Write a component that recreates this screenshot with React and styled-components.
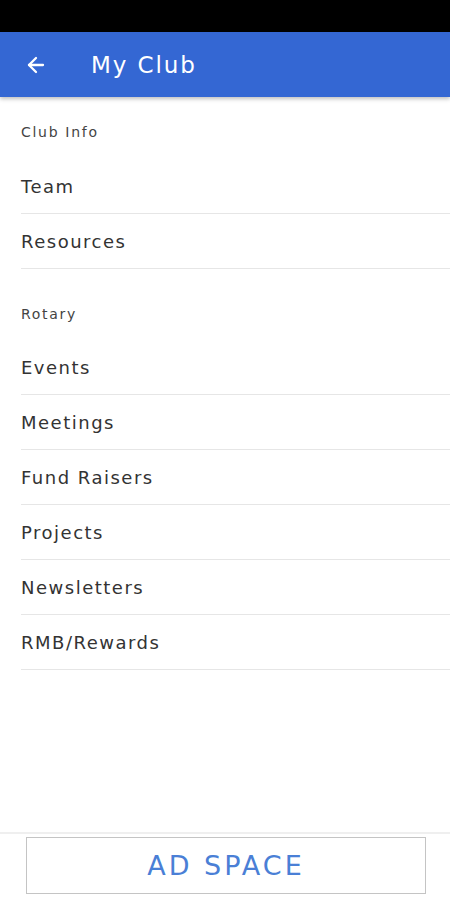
import React from 'react';
import styled, { createGlobalStyle } from 'styled-components';
import { ArrowLeft } from 'lucide-react';

const GlobalStyle = createGlobalStyle`
    html, body {
        margin: 0;
        padding: 0;
        background: #fff;
    }
    body {
        font-family: "DejaVu Sans", "Open Sans", sans-serif;
    }
`;

const Screen = styled.div`
    display: flex;
    flex-direction: column;
    width: 450px;
    height: 900px;
    background: #fff;
    overflow: hidden;
`;

const StatusBar = styled.div`
    height: 32px;
    background: #000;
    flex-shrink: 0;
`;

const Header = styled.header`
    display: flex;
    align-items: center;
    height: 65px;
    flex-shrink: 0;
    background: #3467d3;
    color: #fff;
    box-shadow: 0 2px 4px rgba(0,0,0,0.25);
    position: relative;
    z-index: 1;
`;

const BackButton = styled.button`
    display: flex;
    align-items: center;
    justify-content: center;
    width: 24px;
    height: 24px;
    margin-left: 24px;
    padding: 0;
    border: none;
    background: none;
    color: #fff;
    cursor: pointer;
`;

const Title = styled.h1`
    margin: 0 0 0 43px;
    font-size: 23px;
    font-weight: 500;
    letter-spacing: 1.9px;
`;

const Content = styled.div`
    flex: 1;
    padding-left: 21px;
`;

const SectionLabel = styled.div`
    padding-top: ${(props) => (props.first ? '26px' : '36px')};
    padding-bottom: ${(props) => (props.first ? '18px' : '17px')};
    line-height: 18px;
    font-size: 14px;
    color: #444;
    letter-spacing: 1.7px;
`;

const Row = styled.div`
    display: flex;
    align-items: center;
    height: 55px;
    box-sizing: border-box;
    padding-top: 1px;
    border-bottom: 1.5px solid #e6e6e6;
    font-size: 18px;
    color: #333;
    letter-spacing: 1.5px;
    cursor: pointer;
`;

const Footer = styled.div`
    flex-shrink: 0;
    border-top: 2px solid #efefef;
    padding: 3px 24px 6px 26px;
`;

const AdBox = styled.div`
    display: flex;
    align-items: center;
    justify-content: center;
    height: 55px;
    border: 1.5px solid #c4c4c4;
    color: #4a7fd6;
    font-size: 27px;
    letter-spacing: 3px;
`;

const sections = [
    { title: 'Club Info', items: ['Team', 'Resources'] },
    { title: 'Rotary', items: ['Events', 'Meetings', 'Fund Raisers', 'Projects', 'Newsletters', 'RMB/Rewards'] },
];

export default function App() {
    return (
        <Screen>
            <GlobalStyle />
            <StatusBar />
            <Header>
                <BackButton>
                    <ArrowLeft size={24} strokeWidth={2.3} />
                </BackButton>
                <Title>My Club</Title>
            </Header>
            <Content>
                {sections.map((section, i) => (
                    <div key={section.title}>
                        <SectionLabel first={i === 0}>{section.title}</SectionLabel>
                        {section.items.map((item) => (
                            <Row key={item}>{item}</Row>
                        ))}
                    </div>
                ))}
            </Content>
            <Footer>
                <AdBox>AD SPACE</AdBox>
            </Footer>
        </Screen>
    );
}
